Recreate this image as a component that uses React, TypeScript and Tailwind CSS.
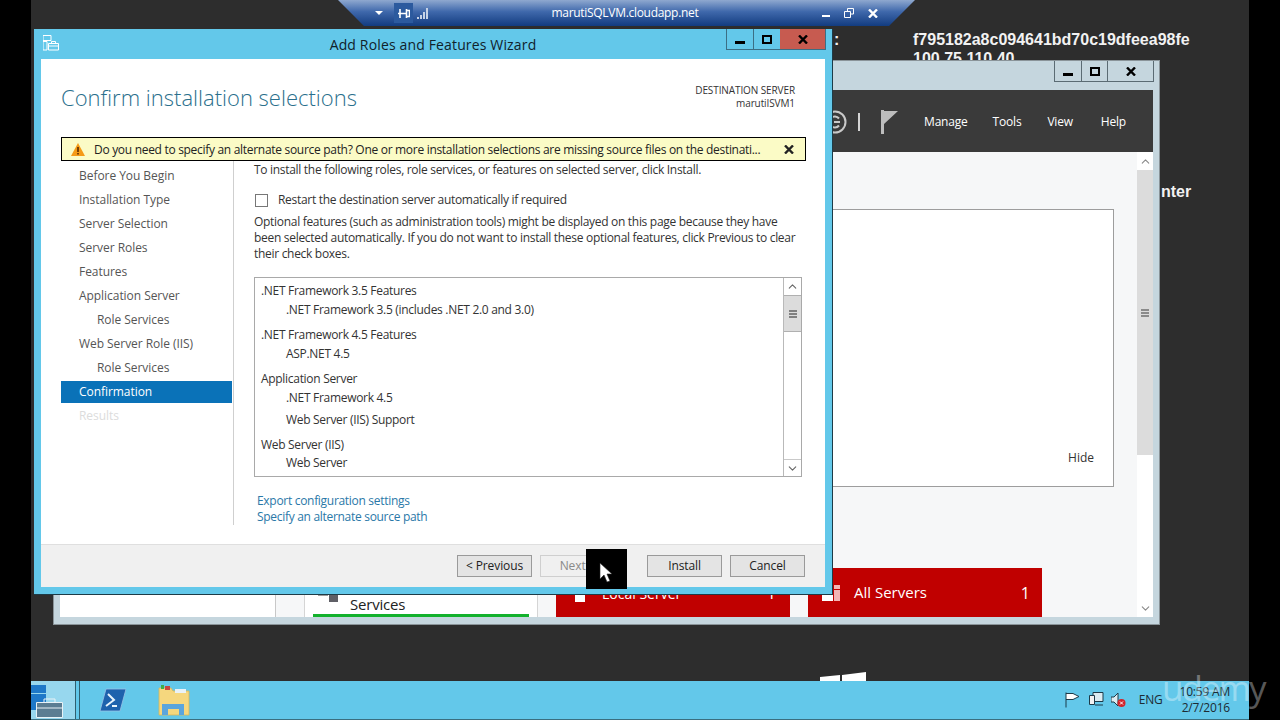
import { ChevronDown, ChevronUp } from 'lucide-react';

const STEPS = [
  { label: 'Before You Begin' },
  { label: 'Installation Type' },
  { label: 'Server Selection' },
  { label: 'Server Roles' },
  { label: 'Features' },
  { label: 'Application Server' },
  { label: 'Role Services', sub: true },
  { label: 'Web Server Role (IIS)' },
  { label: 'Role Services', sub: true },
  { label: 'Confirmation', active: true },
  { label: 'Results', disabled: true },
];

const SELECTIONS = [
  { label: '.NET Framework 3.5 Features', h: 'h-[19px]', top: true },
  { label: '.NET Framework 3.5 (includes .NET 2.0 and 3.0)', h: 'h-[25px]' },
  { label: '.NET Framework 4.5 Features', h: 'h-[19px]', top: true },
  { label: 'ASP.NET 4.5', h: 'h-[25px]' },
  { label: 'Application Server', h: 'h-[19px]', top: true },
  { label: '.NET Framework 4.5', h: 'h-[22px]' },
  { label: 'Web Server (IIS) Support', h: 'h-[25px]' },
  { label: 'Web Server (IIS)', h: 'h-[18px]', top: true },
  { label: 'Web Server', h: 'h-[19px]' },
];

function CloseX({ color = '#000' }: { color?: string }) {
  return (
    <svg width="10" height="9" viewBox="0 0 10 9">
      <path d="M1 .5l8 8M9 .5l-8 8" stroke={color} strokeWidth="2.4" fill="none" />
    </svg>
  );
}

function WinButtons({ dark }: { dark?: boolean }) {
  const border = dark ? 'border-[#5b6b73]' : 'border-[#3b6f85]';
  return (
    <div className={`flex h-[21px] border-x border-b ${border}`}>
      <div className={`flex w-[27px] items-end justify-center border-r pb-[5px] ${border}`}>
        <div className="h-[3px] w-[10px] bg-black" />
      </div>
      <div className={`flex w-[26px] items-center justify-center ${dark ? `border-r ${border}` : ''}`}>
        <div className="h-[9px] w-[10px] border-2 border-black" />
      </div>
      <div className={`flex w-[45px] items-center justify-center ${dark ? '' : 'bg-[#c75b50]'}`}>
        <CloseX />
      </div>
    </div>
  );
}

function RemoteBar() {
  return (
    <div className="absolute left-[307px] top-0 z-10 h-[26px] w-[577px] bg-gradient-to-b from-[#8fa8cf] via-[#3f68ab] via-45% to-[#123c80] text-white [clip-path:polygon(0_0,100%_0,95.5%_100%,4.5%_100%)]">
      <div className="flex h-full items-center pl-[37px] pr-[37px]">
        <div className="h-0 w-0 border-x-[4px] border-t-[4px] border-x-transparent border-t-white" />
        <div className="ml-[11px] flex h-[20px] w-[19px] items-center justify-center bg-[#2c5a9e]">
          <svg width="13" height="11" viewBox="0 0 13 11"><path d="M3 1v9M9.500 1v9M1 5.500h8.500M9.500 2.500h3v6h-3" stroke="#fff" strokeWidth="1.600" fill="none" /></svg>
        </div>
        <svg className="ml-[4px]" width="11" height="12" viewBox="0 0 11 12"><path d="M0 10h2v2H0zM3 8h2v4H3zM6 5h2v7H6zM9 1h2v11H9z" fill="#c5d2e6" /></svg>
        <div className="flex-1 text-center text-[12px] tracking-[-0.3px]">marutiSQLVM.cloudapp.net</div>
        <div className="mt-[6px] h-[2px] w-[8px] bg-white" />
        <svg className="ml-[14px]" width="10" height="10" viewBox="0 0 10 10"><path d="M3.500 3V.5h6V6H7M.5 3.500h6v6h-6z" stroke="#fff" fill="none" /></svg>
        <div className="ml-[14px]"><CloseX color="#fff" /></div>
      </div>
    </div>
  );
}

function BackWindow() {
  return (
    <div className="absolute left-[22px] top-[60px] flex h-[565px] w-[1107px] flex-col border border-[#8a9499] bg-[#c5d6de] px-[6px] pb-[7px]">
      <div className="mr-[-1px] flex h-[29px] shrink-0 justify-end">
        <WinButtons dark />
      </div>
      <div className="flex h-[62px] shrink-0 items-center justify-end bg-[#3a3a3a] pr-[27px] pt-[2px] text-[12px] tracking-[-0.2px] text-white">
        <svg className="mr-[11px]" width="24" height="24" viewBox="0 0 24 24">
          <circle cx="12" cy="12" r="10.500" fill="none" stroke="#c9c9c9" strokeWidth="2" />
          <path d="M16 8.500a5.500 5.500 0 1 0 0 7M11 12h6" fill="none" stroke="#c9c9c9" strokeWidth="2" />
        </svg>
        <svg className="mr-[21px]" width="2" height="18" viewBox="0 0 2 18"><path d="M1 0v18" stroke="#d5d5d5" strokeWidth="2" /></svg>
        <svg className="mr-[26px]" width="17" height="24" viewBox="0 0 17 24"><path d="M0 0h3v24H0zM3 1h14L3 14z" fill="#bdbdbd" /></svg>
        <span className="mr-[25px]">Manage</span>
        <span className="mr-[26px]">Tools</span>
        <span className="mr-[28px]">View</span>
        <span>Help</span>
      </div>
      <div className="flex min-h-0 flex-1">
        <div className="flex flex-1 flex-col bg-[#f6f7f8] pt-[57px] text-[16px]">
          <div className="ml-[80px] mr-[23px] flex h-[278px] shrink-0 items-end justify-end border border-[#9d9d9d] bg-white pb-[19px] pr-[19px] text-[12px] text-[#333]">
            Hide
          </div>
          <div className="mt-[81px] flex h-[49px] shrink-0">
            <div className="w-[216px] border-r border-[#c8c8c8] bg-white" />
            <div className="relative ml-[28px] flex w-[234px] flex-col border-x border-[#d5d5d5] bg-white px-[8px]">
              <svg className="absolute left-[13px] top-[24px]" width="20" height="10" viewBox="0 0 20 10"><path d="M0 0h10v4H0z" fill="#9a9a9a" /><path d="M11 0h9v10h-9z" fill="#5f5f66" /></svg>
              <div className="flex justify-end pr-[5px] pt-[14px] text-[12px] leading-[16px] text-[#444]">1</div>
              <div className="mt-[-3px] pl-[37px] text-[15px] leading-[19px] tracking-[-0.2px] text-[#222]">Services</div>
              <div className="mt-auto h-[3px] bg-[#13b12c]" />
            </div>
            <div className="ml-[18px] flex w-[234px] items-center bg-[#c00000] pl-[19px] pr-[14px] text-white">
              <div className="mt-[9px] h-[10px] w-[10px] bg-white" />
              <span className="ml-[17px] pt-[2px] text-[14px]">Local Server</span>
              <span className="ml-auto">1</span>
            </div>
            <div className="ml-[18px] flex w-[234px] items-center justify-between bg-[#c00000] pl-[14px] pr-[12px] text-white">
              <span className="flex items-center gap-[14px]">
                <svg width="18" height="16" viewBox="0 0 18 16"><path d="M0 6h11v10H0z" fill="#fff" /><path d="M12 0h6v4h-6zM12 5h6v11h-6z" fill="#f3b5b5" /></svg>
                <span className="text-[15px]">All Servers</span>
              </span>
              <span>1</span>
            </div>
          </div>
        </div>
        <div className="flex w-[16px] shrink-0 flex-col bg-white">
          <div className="flex h-[18px] items-center justify-center"><ChevronUp size={13} className="text-[#8a8a8a]" /></div>
          <div className="flex h-[285px] items-center justify-center bg-[#dcdcdc]">
            <div className="flex flex-col gap-[1px]">
              <div className="h-[2px] w-[8px] bg-[#8a8a8a]" />
              <div className="h-[2px] w-[8px] bg-[#8a8a8a]" />
              <div className="h-[2px] w-[8px] bg-[#8a8a8a]" />
            </div>
          </div>
          <div className="mt-auto flex h-[17px] items-center justify-center"><ChevronDown size={13} className="text-[#8a8a8a]" /></div>
        </div>
      </div>
    </div>
  );
}

function ListScrollbar() {
  return (
    <div className="flex w-[18px] shrink-0 flex-col border-l border-[#b9b9b9]">
      <div className="flex h-[17px] shrink-0 items-center justify-center"><ChevronUp size={13} className="text-[#666]" /></div>
      <div className="flex h-[37px] shrink-0 items-center justify-center border-y border-[#b0b0b0] bg-[#dcdcdc]">
        <div className="flex flex-col gap-[1px]">
          <div className="h-[2px] w-[8px] bg-[#808080]" />
          <div className="h-[2px] w-[8px] bg-[#808080]" />
          <div className="h-[2px] w-[8px] bg-[#808080]" />
        </div>
      </div>
      <div className="mt-auto flex h-[17px] items-center justify-center border-t border-[#c9c9c9]"><ChevronDown size={13} className="text-[#666]" /></div>
    </div>
  );
}

function WizButton({ label, disabled }: { label: string; disabled?: boolean }) {
  return (
    <div className={`flex h-[22px] w-[75px] items-center justify-center border text-[12px] tracking-[-0.1px] ${disabled ? 'border-[#cfcfcf] text-[#8a8a8a]' : 'border-[#9a9a9a] bg-[#e4e4e4] text-[#222]'}`}>
      {label}
    </div>
  );
}

function Wizard() {
  return (
    <div className="absolute left-[3px] top-[29px] z-20 flex h-[566px] w-[799px] flex-col border-b border-r border-[#1d3b47] bg-[#63c8ea] px-[7px] pb-[7px]">
      <div className="relative flex h-[30px] shrink-0 items-center justify-center text-[14px] tracking-[0.15px] text-[#10222b]">
        <svg className="absolute left-[2px] top-[6px]" width="16" height="16" viewBox="0 0 16 16">
          <path d="M0 .5h8v5H0zM0 6.500h4V15H0z" fill="none" stroke="#fff" />
          <path d="M5.500 8.500h10V15h-10zM8.500 8.500V6.500h4v2M5.500 11h10" fill="none" stroke="#fff" />
        </svg>
        Add Roles and Features Wizard
        <div className="absolute right-[-1px] top-0">
          <WinButtons />
        </div>
      </div>
      <div className="flex min-h-0 flex-1 flex-col bg-white">
        <div className="flex h-[78px] shrink-0 items-start justify-between pl-[20px] pr-[30px]">
          <div className="mt-[22px] text-[22px] font-light leading-[32px] text-[#2a6f8c]">Confirm installation selections</div>
          <div className="mt-[25px] text-right text-[10px] leading-[13px] tracking-[-0.1px] text-[#333]">
            <div>DESTINATION SERVER</div>
            <div>marutiISVM1</div>
          </div>
        </div>
        <div className="mx-[20px] flex h-[24px] w-[745px] shrink-0 items-center border border-black bg-[#fbfbc6] pl-[9px] pr-[11px] text-[12px] tracking-[-0.3px] text-[#222]">
          <svg width="14" height="13" viewBox="0 0 14 13"><path d="M7 0l7 13H0z" fill="#f59a16" /><path d="M6.200 4h1.600v5H6.200zM6.200 10h1.600v1.500H6.200z" fill="#5a2b00" /></svg>
          <span className="ml-[9px] flex-1 whitespace-nowrap pt-[1px]">Do you need to specify an alternate source path? One or more installation selections are missing source files on the destinati...</span>
          <CloseX color="#222" />
        </div>
        <div className="flex min-h-0 flex-1">
          <div className="h-[364px] w-[193px] shrink-0 border-r border-[#cfcfcf] pl-[20px] pt-[3px] text-[12px] tracking-[-0.05px] text-[#555]">
            {STEPS.map((s, i) => (
              <div
                key={i}
                className={`flex w-[171px] items-center ${s.sub ? 'pl-[36px]' : 'pl-[18px]'} ${s.active ? 'my-[1px] h-[22px] bg-[#0a72b8] text-white' : 'h-[24px]'} ${s.disabled ? 'text-[#dcdcdc]' : ''}`}
              >
                {s.label}
              </div>
            ))}
          </div>
          <div className="flex min-w-0 flex-1 flex-col pl-[20px] pr-[23px] text-[12px] tracking-[-0.3px] text-[#333]">
            <div className="h-[17px] leading-[17px]">To install the following roles, role services, or features on selected server, click Install.</div>
            <div className="mt-[15px] flex h-[14px] items-center">
              <div className="ml-[1px] h-[13px] w-[13px] border border-[#777] bg-white" />
              <span className="ml-[10px]">Restart the destination server automatically if required</span>
            </div>
            <div className="mt-[7px] leading-[16px]">
              Optional features (such as administration tools) might be displayed on this page because they have
              <br />
              been selected automatically. If you do not want to install these optional features, click Previous to clear
              <br />
              their check boxes.
            </div>
            <div className="mt-[15px] flex h-[200px] shrink-0 border border-[#a9a9a9]">
              <div className="flex-1 overflow-hidden pl-[6px] pt-[3px]">
                {SELECTIONS.map((item) => (
                  <div key={item.label} className={`${item.h} leading-[19px] ${item.top ? '' : 'pl-[25px]'}`}>
                    {item.label}
                  </div>
                ))}
              </div>
              <ListScrollbar />
            </div>
            <div className="mt-[16px] pl-[3px] leading-[16px] text-[#2a78a8]">
              <div>Export configuration settings</div>
              <div>Specify an alternate source path</div>
            </div>
          </div>
        </div>
        <div className="relative flex h-[43px] shrink-0 items-start border-t border-[#dfdfdf] bg-[#f0f0f0] pl-[416px] pt-[10px]">
          <WizButton label="< Previous" />
          <div className="ml-[8px]"><WizButton label="Next >" disabled /></div>
          <div className="ml-[32px]"><WizButton label="Install" /></div>
          <div className="ml-[8px]"><WizButton label="Cancel" /></div>
        </div>
      </div>
    </div>
  );
}

function Cursor() {
  return (
    <div className="absolute left-[555px] top-[549px] z-30 h-[40px] w-[41px] bg-black">
      <svg className="ml-[13px] mt-[13px]" width="13" height="22" viewBox="0 0 13 22">
        <path d="M1 1v16l4-4 3 7 3-1-3-7h5z" fill="#fff" stroke="#222" strokeWidth="0.6" />
      </svg>
    </div>
  );
}

function Taskbar() {
  return (
    <div className="flex h-[39px] shrink-0 items-stretch border-b border-[#3a6f80] bg-[#63c8ea]">
      <div className="flex w-[44px] items-center bg-[#97d7ee] pt-[1px]">
        <svg width="32" height="34" viewBox="0 0 32 34">
          <path d="M0 1h15v8H0z" fill="#1e78c8" />
          <path d="M0 10h15v16H0z" fill="#1e78c8" />
          <path d="M5.500 18.500h26v15h-26z" fill="#5b7d92" stroke="#e8f2f6" />
          <path d="M13 18v-3h11v3M5 24h26" fill="none" stroke="#e8f2f6" />
        </svg>
      </div>
      <div className="w-[5px] border-x border-[#2f5f70]" />
      <div className="ml-[20px] flex items-center">
        <svg width="26" height="24" viewBox="0 0 26 24">
          <path d="M6 1h20l-6 22H0z" fill="#1e62ad" stroke="#9ac3e6" strokeWidth="0.8" />
          <path d="M8 6l6 6-8 6" fill="none" stroke="#e8f3fb" strokeWidth="2" />
          <path d="M12 18h5" stroke="#e8f3fb" strokeWidth="2" />
        </svg>
      </div>
      <div className="ml-[32px] flex items-center">
        <svg width="32" height="32" viewBox="0 0 32 32">
          <path d="M1 4h12l2 3h16v24H1z" fill="#f5d77e" stroke="#d8b559" strokeWidth="0.8" />
          <path d="M3 1h3v4H3z" fill="#3fae49" />
          <path d="M7 2h5v4H7z" fill="#c8473f" />
          <path d="M17 5h11v4H17z" fill="#e9f2f8" />
          <path d="M4 20h22v11h-5v-6H10v6H4z" fill="#5aa5dd" />
        </svg>
      </div>
      <div className="ml-auto flex items-center pr-[19px] text-[12px] tracking-[-0.2px] text-[#1d2b33]">
        <svg width="15" height="16" viewBox="0 0 15 16"><path d="M1 .5v15M1 1.500h7l6 3-6 3H1" fill="#fff" stroke="#1d3a48" /></svg>
        <svg className="ml-[9px]" width="15" height="16" viewBox="0 0 15 16"><path d="M4 .5h10v9H4z" fill="#dcecf2" stroke="#1d3a48" /><path d="M.5 3.500h5v9h-5zM6 13h8" fill="#f2f2f2" stroke="#1d3a48" /></svg>
        <svg className="ml-[7px]" width="15" height="16" viewBox="0 0 15 16"><path d="M0 5h3l4-4v13l-4-4H0z" fill="#dcecf2" stroke="#1d3a48" /><circle cx="10.500" cy="11" r="4" fill="#d2232a" /><path d="M9 9.500l3 3M12 9.500l-3 3" stroke="#fff" /></svg>
        <span className="ml-[13px]">ENG</span>
        <div className="ml-[17px] text-right leading-[16px]">
          <div>10:59 AM</div>
          <div>2/7/2016</div>
        </div>
      </div>
    </div>
  );
}

export default function App() {
  return (
    <div className="relative flex h-[720px] w-[1280px] overflow-hidden bg-black font-['Open_Sans',sans-serif]">
      <div className="ml-[31px] flex w-[1218px] flex-col bg-[#2d2d2d]">
        <div className="relative min-h-0 flex-1 overflow-hidden">
          <div className="absolute left-[882px] top-[30px] font-['Liberation_Sans',sans-serif] text-[16px] font-bold leading-[19px] text-[#f2f2f2]">
            <div>f795182a8c094641bd70c19dfeea98fe</div>
            <div>100.75.110.40</div>
          </div>
          <div className="absolute left-[803px] top-[30px] font-['Liberation_Sans',sans-serif] text-[16px] font-bold leading-[19px] text-[#f2f2f2]">:</div>
          <div className="absolute left-[1130px] top-[182px] font-['Liberation_Sans',sans-serif] text-[16px] font-bold leading-[19px] text-[#f2f2f2]">nter</div>
          <svg className="absolute bottom-0 left-[789px]" width="48" height="9" viewBox="0 0 48 9"><path d="M0 5l20-2v6H0zM22 3l24-3v9H22z" fill="#fff" /></svg>
          <BackWindow />
          <RemoteBar />
          <Wizard />
          <Cursor />
        </div>
        <Taskbar />
      </div>
      <div className="absolute left-[1162px] top-[663px] z-40 text-[35px] leading-[50px] tracking-[-2px] text-white/35">udemy</div>
    </div>
  );
}
